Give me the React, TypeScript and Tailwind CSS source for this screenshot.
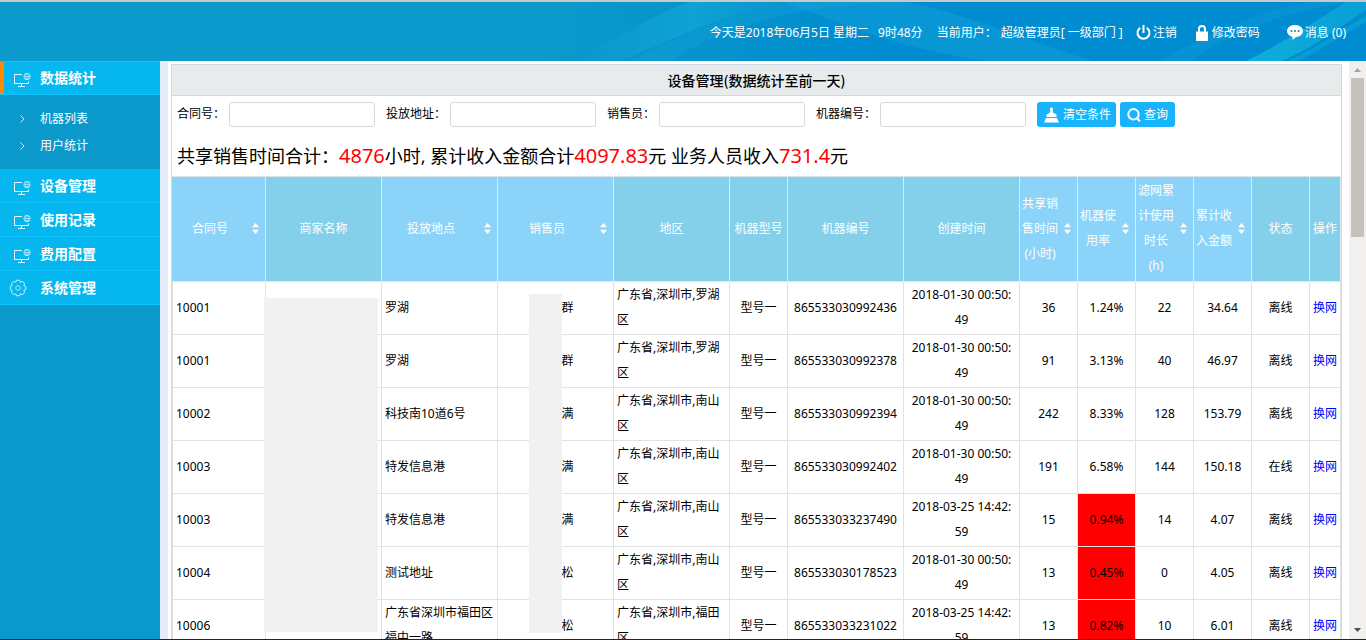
import React from "react";

const SANS = "font-['Noto_Sans','Noto_Sans_CJK_SC',sans-serif]";
const CJK = "font-['Noto_Sans_CJK_SC',sans-serif]";

function MonitorIcon() {
  return (
    <svg width="18" height="16" viewBox="0 0 18 16" fill="none" stroke="#fff" aria-hidden="true">
      <path d="M9 2.5H1.5v9h14V9.5M8.5 11.5v3M5 14.5h7" strokeOpacity="0.9" />
      <g strokeOpacity="0.6">
        <circle cx="14" cy="4.5" r="3.2" />
        <ellipse cx="14" cy="4.500" rx="1.300" ry="3" strokeWidth="0.8" />
        <path d="M11 4.500h6M11.800 6.800h4.400" strokeWidth="0.8" />
      </g>
    </svg>
  );
}

function GearIcon() {
  return (
    <svg width="18" height="18" viewBox="-9 -9 18 18" fill="none" stroke="#fff" strokeLinejoin="round" aria-hidden="true">
      <path
        strokeOpacity="0.8"
        d="M-1.500-7.600Q0-8.200 1.500-7.600L2.200-5.900 4.300-6.500Q5.800-5.800 6.500-4.300L5.900-2.200 7.600-1.500Q8.200 0 7.600 1.500L5.900 2.200 6.500 4.300Q5.800 5.800 4.300 6.500L2.200 5.900 1.500 7.600Q0 8.200-1.500 7.600L-2.200 5.900-4.300 6.500Q-5.800 5.800-6.500 4.300L-5.900 2.200-7.600 1.500Q-8.200 0-7.600-1.500L-5.900-2.200-6.500-4.300Q-5.800-5.800-4.300-6.500L-2.200-5.900z"
      />
      <circle r="2.300" strokeOpacity="0.6" />
    </svg>
  );
}

function SortIcon() {
  return (
    <svg width="7" height="11" viewBox="0 0 7 11" fill="#fff" className="shrink-0" aria-hidden="true">
      <path d="M3.500 0L7 4.300H0zM3.500 11L7 6.700H0z" />
    </svg>
  );
}

function HeaderArt() {
  return (
    <svg className="absolute inset-y-0 right-0 h-full w-[816px]" viewBox="0 0 816 59" preserveAspectRatio="none" aria-hidden="true">
      <defs>
        <linearGradient id="sweep" x1="0" x2="1">
          <stop offset="0" stopColor="#18b0d8" stopOpacity="0" />
          <stop offset="0.5" stopColor="#18b0d8" stopOpacity="0.5" />
          <stop offset="1" stopColor="#18b0d8" stopOpacity="0.05" />
        </linearGradient>
        <linearGradient id="ray" x1="0" x2="1">
          <stop offset="0" stopColor="#10b4dc" stopOpacity="0.85" />
          <stop offset="1" stopColor="#10b4dc" stopOpacity="0.5" />
        </linearGradient>
      </defs>
      <path d="M20 59C70 38 105 10 140 0H260C180 5 120 40 70 59z" fill="url(#sweep)" />
      <path d="M234 0C290 22 360 50 440 59H543C480 40 420 12 356 0z" fill="#16a5dc" fillOpacity="0.4" />
      <path d="M120 59C170 28 240 3 350 0H250C170 10 110 45 80 59z" fill="#16a5dc" fillOpacity="0.3" />
      <path d="M640 59C680 30 740 8 800 0H760C700 12 650 36 610 59z" fill="#16a5dc" fillOpacity="0.3" />
      <path d="M696 59C735 40 772 15 796 0H816V8C790 25 765 45 732 59z" fill="url(#ray)" />
      <path d="M738 59C765 46 795 26 816 14V20C795 32 770 48 748 59z" fill="#10b4dc" fillOpacity="0.4" />
    </svg>
  );
}

const menus = ["设备管理", "使用记录", "费用配置"];

function MenuButton({ label, gear = false, active = false }: { label: string; gear?: boolean; active?: boolean }) {
  return (
    <button
      type="button"
      className={`flex h-[34px] w-full items-center border-b border-[#0cc4fa] bg-[#06b6ee] text-left text-sm font-bold text-white ${
        active ? "border-t" : ""
      }`}
    >
      <span className={`h-full w-1 ${active ? "bg-[#ff8a00]" : ""}`} />
      <span className={`flex w-9 items-center ${gear ? "pl-[5px]" : "pt-1 pl-[9px]"}`}>
        {gear ? <GearIcon /> : <MonitorIcon />}
      </span>
      <span className="pb-[2px]">{label}</span>
    </button>
  );
}

function Sidebar() {
  return (
    <nav className={`w-[168px] shrink-0 border-r-8 border-[#e4ecf9] bg-[#0b99cb] ${CJK}`}>
      <MenuButton label="数据统计" active />
      <ul className="py-[10px] text-xs text-white">
        {["机器列表", "用户统计"].map((t) => (
          <li key={t}>
            <a href="#" className="flex h-[27px] items-center pl-5">
              <svg width="5" height="8" viewBox="0 0 5 8" fill="none" stroke="#fff" strokeOpacity="0.8" className="mr-[15px]" aria-hidden="true">
                <path d="M.5.5L4 4 .5 7.500" />
              </svg>
              <span className="pb-[2px]">{t}</span>
            </a>
          </li>
        ))}
      </ul>
      {menus.map((m) => (
        <MenuButton key={m} label={m} />
      ))}
      <MenuButton label="系统管理" gear />
    </nav>
  );
}

function TopBar() {
  return (
    <header className="relative h-[61px] shrink-0 border-t-2 border-[#c9c9c9] bg-linear-to-r from-[#0c99cb] from-40% to-[#008cd0] to-65%">
      <HeaderArt />
      <div className="relative flex h-full items-center justify-end pt-[2px] pr-5 text-xs whitespace-pre text-white">
        <span>今天是2018年06月5日 星期二</span>
        <span className="ml-[9px]">9时48分</span>
        <span className="ml-[14px]">当前用户：</span>
        <span className="ml-1">超级管理员[ 一级部门 ]</span>
        <a href="#" className="ml-[13px] flex items-center gap-[2px]">
          <svg width="15" height="16" viewBox="0 0 15 16" fill="none" stroke="#fff" strokeWidth="2" aria-hidden="true">
            <path d="M7.500 0v8M4.200 2.800a6 6 0 1 0 6.600 0" />
          </svg>
          注销
        </a>
        <a href="#" className="ml-[19px] flex items-center gap-1">
          <svg width="12" height="16" viewBox="0 0 12 16" aria-hidden="true">
            <path d="M3 7V4a3 3 0 0 1 6 0v3" fill="none" stroke="#fff" strokeWidth="2" />
            <path d="M0 6.500h12V16H0z" fill="#fff" />
          </svg>
          修改密码
        </a>
        <a href="#" className="ml-[27px] flex items-center gap-[2px]">
          <svg width="16" height="15" viewBox="0 0 16 15" aria-hidden="true">
            <path d="M8 0c4.500 0 8 2.600 8 6s-3.500 6-7 6L5.500 15v-3.300C2.500 11 0 9 0 6c0-3.400 3.500-6 8-6z" fill="#fff" />
            <g fill="#0893d0">
              <circle cx="4.500" cy="6" r="1.100" />
              <circle cx="8" cy="6" r="1.100" />
              <circle cx="11.500" cy="6" r="1.100" />
            </g>
          </svg>
          消息 (0)
        </a>
      </div>
    </header>
  );
}

function Field({ id, label }: { id: string; label: string }) {
  return (
    <div className="flex items-center gap-1">
      <label htmlFor={id}>{label}</label>
      <input id={id} type="text" className="h-[25px] w-[146px] rounded-[3px] border border-[#d9d9d9] bg-white px-1" />
    </div>
  );
}

function Filters() {
  return (
    <form className="flex items-center gap-[11px] pt-[5px] pb-2 pl-[5px] text-xs whitespace-nowrap">
      <Field id="contract" label="合同号：" />
      <Field id="address" label="投放地址：" />
      <Field id="seller" label="销售员：" />
      <Field id="machine" label="机器编号：" />
      <div className="flex gap-1 pt-px text-white">
        <button type="button" className="flex h-[25px] items-center gap-1 rounded-[3px] bg-[#17b4fc] pr-[5px] pl-[7px]">
          <svg width="15" height="16" viewBox="0 0 15 16" fill="#fff" aria-hidden="true">
            <path d="M6.200 1.200Q7.500-.6 8.800 1.200V5.500L12.500 7.500V10H2.500V7.500L6.200 5.500zM2 11H13L15 15.500H0z" />
          </svg>
          清空条件
        </button>
        <button type="button" className="flex h-[25px] items-center gap-[3px] rounded-[3px] bg-[#17b4fc] px-[7px]">
          <svg width="14" height="14" viewBox="0 0 14 14" fill="none" stroke="#fff" strokeWidth="2" aria-hidden="true">
            <circle cx="6.500" cy="6.300" r="5.200" />
            <path d="M10 10.200L13 13.300" />
          </svg>
          查询
        </button>
      </div>
    </form>
  );
}

const columns: { title: string; width: string; sort?: boolean }[] = [
  { title: "合同号", width: "w-[94px]", sort: true },
  { title: "商家名称", width: "w-[116px]" },
  { title: "投放地点", width: "w-[116px]", sort: true },
  { title: "销售员", width: "w-[116px]", sort: true },
  { title: "地区", width: "w-[116px]" },
  { title: "机器型号", width: "w-[58px]" },
  { title: "机器编号", width: "w-[116px]" },
  { title: "创建时间", width: "w-[116px]" },
  { title: "共享销售时间(小时)", width: "w-[58px]", sort: true },
  { title: "机器使用率", width: "w-[58px]", sort: true },
  { title: "滤网累计使用时长(h)", width: "w-[58px]", sort: true },
  { title: "累计收入金额", width: "w-[58px]", sort: true },
  { title: "状态", width: "w-[58px]" },
  { title: "操作", width: "w-[31px]" },
];

const rows = [
  ["10001", "罗湖", "群", "广东省,深圳市,罗湖区", "865533030992436", "2018-01-30 00:50:49", "36", "1.24%", "22", "34.64", "离线"],
  ["10001", "罗湖", "群", "广东省,深圳市,罗湖区", "865533030992378", "2018-01-30 00:50:49", "91", "3.13%", "40", "46.97", "离线"],
  ["10002", "科技南10道6号", "满", "广东省,深圳市,南山区", "865533030992394", "2018-01-30 00:50:49", "242", "8.33%", "128", "153.79", "离线"],
  ["10003", "特发信息港", "满", "广东省,深圳市,南山区", "865533030992402", "2018-01-30 00:50:49", "191", "6.58%", "144", "150.18", "在线"],
  ["10003", "特发信息港", "满", "广东省,深圳市,南山区", "865533033237490", "2018-03-25 14:42:59", "15", "0.94%", "14", "4.07", "离线"],
  ["10004", "测试地址", "松", "广东省,深圳市,南山区", "865533030178523", "2018-01-30 00:50:49", "13", "0.45%", "0", "4.05", "离线"],
  ["10006", "广东省深圳市福田区福中一路", "松", "广东省,深圳市,福田区", "865533033231022", "2018-03-25 14:42:59", "13", "0.82%", "10", "6.01", "离线"],
];

function Cell({ children, className = "text-center" }: { children?: React.ReactNode; className?: string }) {
  return <td className={`border-r border-b border-[#e2e2e2] px-[3px] pb-[2px] break-all ${className}`}>{children}</td>;
}

function DataTable() {
  return (
    <div className="relative border-t border-[#dfe3e6]">
      <table className="w-full table-fixed border-separate border-spacing-0 text-xs leading-[25px]">
        <colgroup>
          {columns.map((c) => (
            <col key={c.title} className={c.width} />
          ))}
        </colgroup>
        <thead>
          <tr className="text-white">
            {columns.map((c) => (
              <th
                key={c.title}
                className={`h-[105px] border-r border-b border-[#dfe8ee] p-0 pb-[2px] font-normal ${c.sort ? "bg-[#8bd3f8]" : "bg-[#84cfe9]"}`}
              >
                {c.sort ? (
                  <button type="button" className="flex w-full items-center gap-[5px] pr-[6px] pl-px">
                    <span className="flex-1 break-all">{c.title}</span>
                    <SortIcon />
                  </button>
                ) : (
                  c.title
                )}
              </th>
            ))}
          </tr>
        </thead>
        <tbody>
          {rows.map(([no, place, seller, area, machine, time, hours, rate, filter, income, state], i) => (
            <tr key={i}>
              <Cell className="border-l text-left">{no}</Cell>
              <Cell />
              <Cell className="text-left">{place}</Cell>
              <Cell>
                <span className="pl-6">{seller}</span>
              </Cell>
              <Cell className="text-left">{area}</Cell>
              <Cell>型号一</Cell>
              <Cell>{machine}</Cell>
              <Cell>
                <span className="block px-[3px]">{time}</span>
              </Cell>
              <Cell>{hours}</Cell>
              <Cell className={parseFloat(rate) < 1 ? "bg-[#ff0000] text-center" : "text-center"}>{rate}</Cell>
              <Cell>{filter}</Cell>
              <Cell>{income}</Cell>
              <Cell>{state}</Cell>
              <Cell>
                <a href="#" className="text-[#0000ff]">换网</a>
              </Cell>
            </tr>
          ))}
        </tbody>
      </table>
      <div className="absolute top-[121px] left-[92px] h-[334px] w-[114px] bg-[#f1f1f1]" />
      <div className="absolute top-[117px] left-[357px] h-[339px] w-[33px] bg-[#f1f1f1]" />
    </div>
  );
}

function ScrollTrack() {
  return (
    <div className="flex w-[17px] shrink-0 flex-col items-center justify-between bg-[#f1f0ef] pt-[7px] pb-[7px]" aria-hidden="true">
      <div className="flex flex-col items-center gap-[6px]">
        <svg width="7" height="4" viewBox="0 0 7 4" fill="#a3a3a3"><path d="M3.500 0L7 4H0z" /></svg>
        <div className="h-[159px] w-[13px] bg-[#c5c2bc]" />
      </div>
      <svg width="7" height="4" viewBox="0 0 7 4" fill="#505050"><path d="M3.500 4L7 0H0z" /></svg>
    </div>
  );
}

export default function App() {
  return (
    <div className={`flex h-screen flex-col overflow-hidden border-b border-[#20242c] bg-white text-black ${SANS}`}>
      <TopBar />
      <div className="flex min-h-0 flex-1">
        <Sidebar />
        <main className="min-w-0 flex-1 overflow-hidden pt-[3px] pr-[7px] pl-[3px]">
          <section className="border border-[#d3d9e4]">
            <h1 className={`flex h-[31px] items-center justify-center border-b border-[#d3d9e4] bg-[#e7ebec] pb-px text-sm font-medium ${CJK}`}>
              设备管理(数据统计至前一天)
            </h1>
            <Filters />
            <p className="flex h-[41px] items-center pl-[5px] text-lg whitespace-pre">
              <span>
                共享销售时间合计：<span className="text-xl text-[#ff0000]">4876</span>小时, 累计收入金额合计
                <span className="text-xl text-[#ff0000]">4097.83</span>元 业务人员收入
                <span className="text-xl text-[#ff0000]">731.4</span>元
              </span>
            </p>
            <DataTable />
          </section>
        </main>
        <ScrollTrack />
      </div>
    </div>
  );
}
